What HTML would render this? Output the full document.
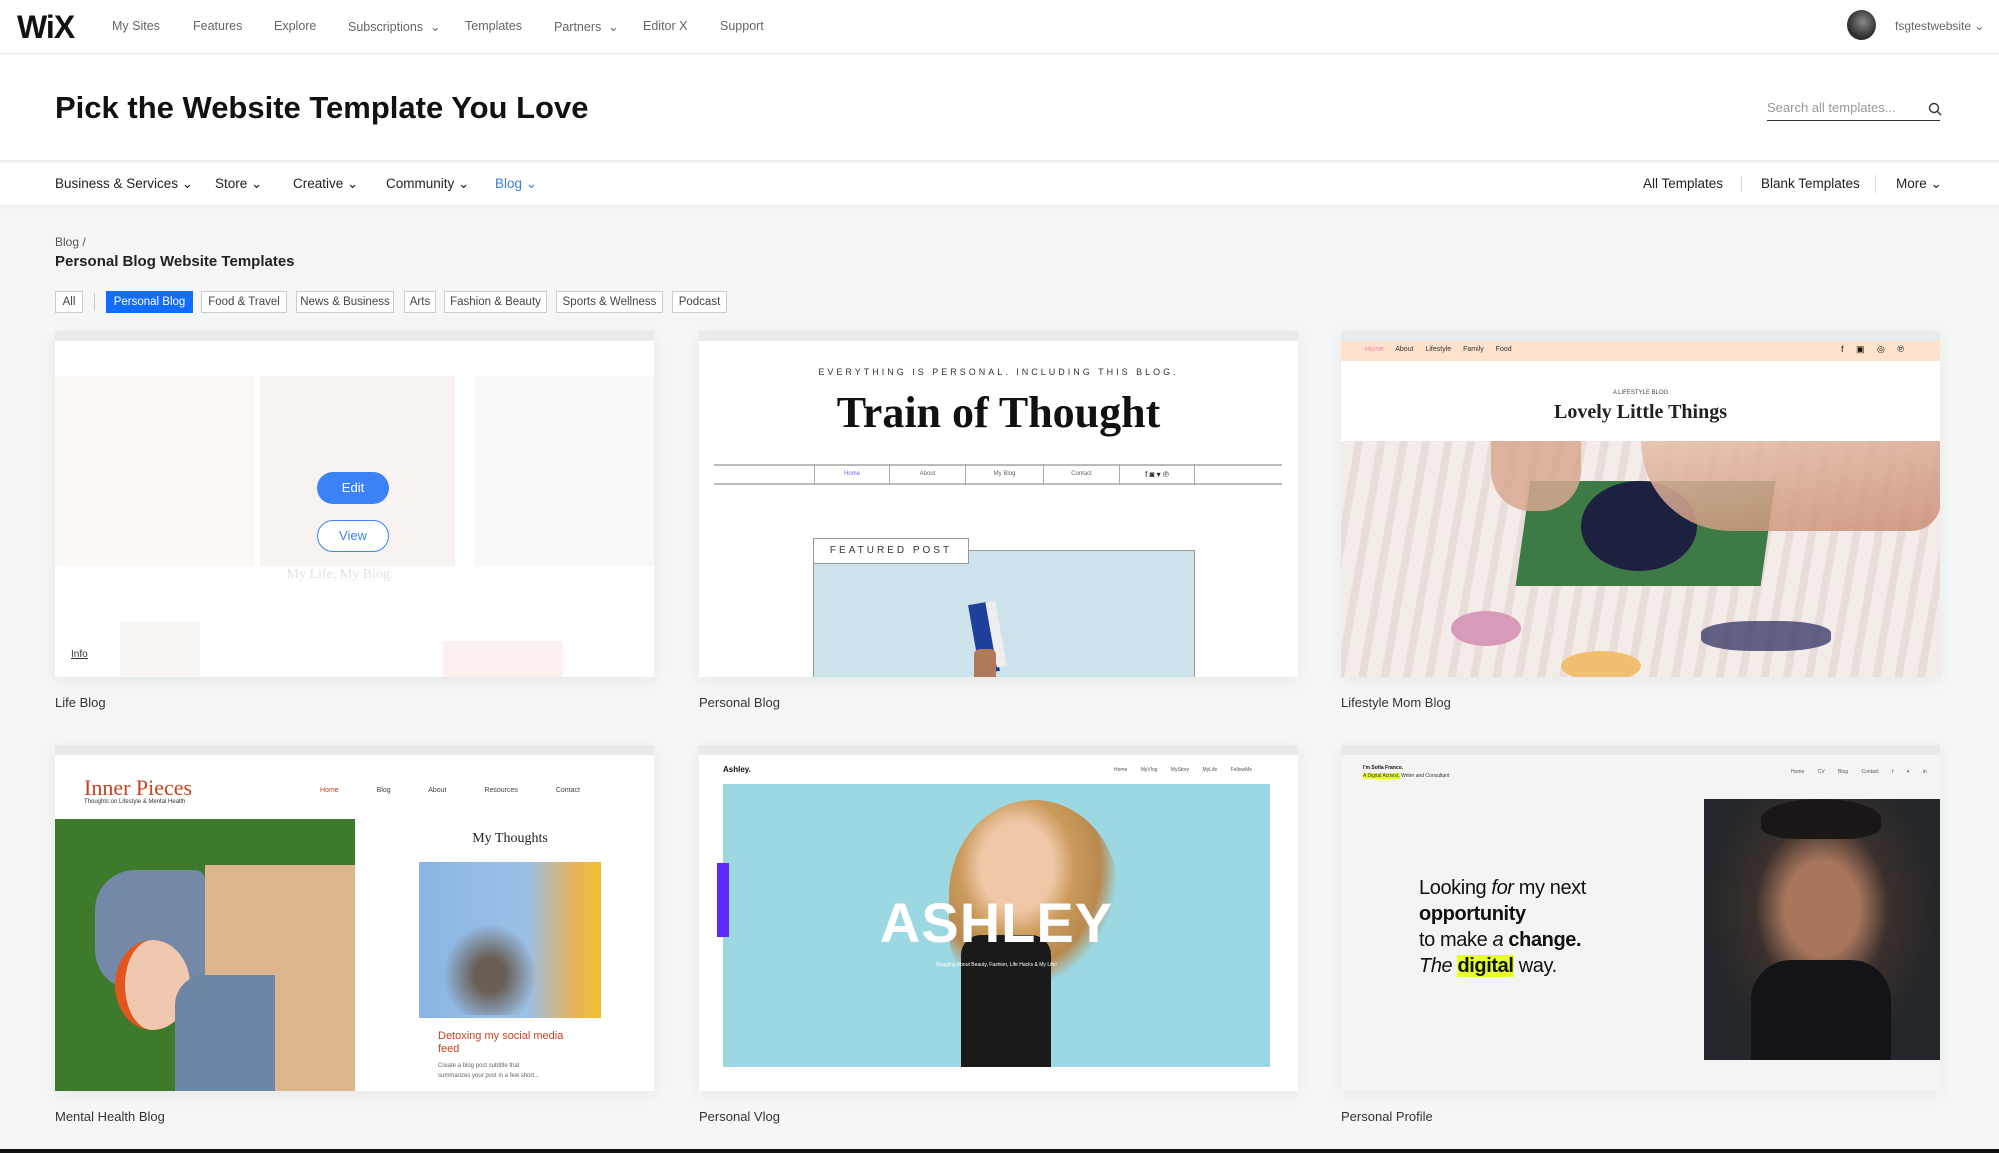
<!DOCTYPE html>
<html><head><meta charset="utf-8">
<style>
*{margin:0;padding:0;box-sizing:border-box}
body{width:1999px;height:1153px;overflow:hidden;background:#f5f6f6;font-family:"Liberation Sans",sans-serif;color:#20303c;position:relative}
.abs{position:absolute}
.top{position:absolute;left:0;top:0;width:1999px;height:54px;background:#fff;border-bottom:1px solid #eee}
.top .n{position:absolute;top:19px;font-size:12.5px;color:#666}
.hero{position:absolute;left:0;top:55px;width:1999px;height:107px;background:#fff;border-bottom:2px solid #eee}
.cat{position:absolute;left:0;top:163px;width:1999px;height:42px;background:#fff;box-shadow:0 2px 3px rgba(0,0,0,.04)}
.cat span{position:absolute;top:13px;font-size:13.5px;color:#222}
.chip{position:absolute;top:291px;height:22px;border:1px solid #ccc;background:#fff;font-size:11.5px;color:#444;line-height:20px;text-align:center}
.card{position:absolute;width:599px;height:346px;background:#fff;overflow:hidden;box-shadow:0 4px 14px rgba(0,0,0,.06)}
.card .bar{position:absolute;left:0;top:0;width:100%;height:10px;background:#e9eaec}
.lbl{position:absolute;font-size:13px;color:#333}
</style></head><body>
<div class="top">
 <div class="abs" style="left:17px;top:9px;font-size:32px;font-weight:bold;letter-spacing:-1px;color:#111">WiX</div>
 <span class="n" style="left:112px">My Sites</span>
 <span class="n" style="left:193px">Features</span>
 <span class="n" style="left:274px">Explore</span>
 <span class="n" style="left:348px">Subscriptions &nbsp;⌄</span>
 <span class="n" style="left:465px">Templates</span>
 <span class="n" style="left:554px">Partners &nbsp;⌄</span>
 <span class="n" style="left:643px">Editor X</span>
 <span class="n" style="left:720px">Support</span>
 <div class="abs" style="left:1847px;top:10px;width:29px;height:30px;border-radius:50%;background:radial-gradient(circle at 55% 40%,#888,#333 60%,#111)"></div>
 <span class="n" style="left:1895px;font-size:12px">fsgtestwebsite ⌄</span>
</div>
<div class="hero">
 <div class="abs" style="left:55px;top:35px;font-size:31px;font-weight:bold;color:#111">Pick the Website Template You Love</div>
 <div class="abs" style="left:1767px;top:45px;font-size:13px;color:#999">Search all templates...</div>
 <svg class="abs" style="left:1928px;top:47px" width="14" height="14" viewBox="0 0 14 14"><circle cx="6" cy="6" r="4.5" fill="none" stroke="#333" stroke-width="1.4"/><path d="M9.5 9.5L13 13" stroke="#333" stroke-width="1.4"/></svg>
 <div class="abs" style="left:1767px;top:65px;width:173px;height:1px;background:#333"></div>
</div>
<div class="cat">
 <span style="left:55px">Business &amp; Services ⌄</span>
 <span style="left:215px">Store ⌄</span>
 <span style="left:293px">Creative ⌄</span>
 <span style="left:386px">Community ⌄</span>
 <span style="left:495px;color:#3b7de9">Blog ⌄</span>
 <span style="left:1643px">All Templates</span>
 <div class="abs" style="left:1741px;top:12px;width:1px;height:18px;background:#ddd"></div>
 <span style="left:1761px">Blank Templates</span>
 <div class="abs" style="left:1875px;top:12px;width:1px;height:18px;background:#ddd"></div>
 <span style="left:1896px">More ⌄</span>
</div>
<div class="abs" style="left:55px;top:235px;font-size:12px;color:#555">Blog /</div>
<div class="abs" style="left:55px;top:253px;font-size:15px;font-weight:bold;color:#222">Personal Blog Website Templates</div>
<div class="chip" style="left:55px;width:28px">All</div>
<div class="abs" style="left:94px;top:293px;width:1px;height:18px;background:#ccc"></div>
<div class="chip" style="left:106px;width:87px;background:#116dff;border-color:#116dff;color:#fff">Personal Blog</div>
<div class="chip" style="left:201px;width:86px">Food &amp; Travel</div>
<div class="chip" style="left:296px;width:98px">News &amp; Business</div>
<div class="chip" style="left:404px;width:32px">Arts</div>
<div class="chip" style="left:444px;width:103px">Fashion &amp; Beauty</div>
<div class="chip" style="left:556px;width:107px">Sports &amp; Wellness</div>
<div class="chip" style="left:672px;width:55px">Podcast</div>

<!-- Card 1 -->
<div class="card" style="left:55px;top:331px">
 <div class="bar"></div>
 <div class="abs" style="left:0;top:45px;width:200px;height:190px;background:#fbf8f6"></div>
 <div class="abs" style="left:205px;top:45px;width:195px;height:190px;background:#f8f3f1"></div>
 <div class="abs" style="left:420px;top:45px;width:179px;height:190px;background:#fbf9f7"></div>
 <div class="abs" style="left:220px;top:236px;width:130px;font-family:'Liberation Serif',serif;font-size:14px;color:#e2e2e2;text-align:center">My Life, My Blog.</div>
 <div class="abs" style="left:65px;top:290px;width:80px;height:56px;background:#faf6f4"></div>
 <div class="abs" style="left:388px;top:310px;width:120px;height:36px;background:#fbf0ed"></div>
 <div class="abs" style="left:262px;top:141px;width:72px;height:32px;border-radius:16px;background:#3b82f6;color:#fff;font-size:13px;text-align:center;line-height:32px">Edit</div>
 <div class="abs" style="left:262px;top:189px;width:72px;height:32px;border-radius:16px;border:1.5px solid #3b82f6;background:#fff;color:#3b82f6;font-size:13px;text-align:center;line-height:29px">View</div>
 <div class="abs" style="left:16px;top:318px;font-size:10px;color:#333;text-decoration:underline">Info</div>
</div>
<div class="lbl" style="left:55px;top:695px">Life Blog</div>

<!-- Card 2 -->
<div class="card" style="left:699px;top:331px">
 <div class="bar"></div>
 <div class="abs" style="left:0;top:36px;width:599px;text-align:center;font-size:9px;letter-spacing:3px;color:#333">EVERYTHING IS PERSONAL. INCLUDING THIS BLOG.</div>
 <div class="abs" style="left:0;top:56px;width:599px;text-align:center;font-family:'Liberation Serif',serif;font-weight:bold;font-size:44px;color:#111">Train of Thought</div>
 <div class="abs" style="left:15px;top:133px;width:568px;height:21px;border-top:2px solid #bbb;border-bottom:2px solid #bbb"></div>
 <div class="abs" style="left:115px;top:133px;height:21px;display:flex;font-size:6px;color:#666">
  <div style="width:75px;border-left:1px solid #aaa;text-align:center;line-height:21px;color:#7a5cff">Home</div>
  <div style="width:76px;border-left:1px solid #aaa;text-align:center;line-height:21px">About</div>
  <div style="width:78px;border-left:1px solid #aaa;text-align:center;line-height:21px">My Blog</div>
  <div style="width:76px;border-left:1px solid #aaa;text-align:center;line-height:21px">Contact</div>
  <div style="width:76px;border-left:1px solid #aaa;border-right:1px solid #aaa;text-align:center;line-height:21px;color:#222;font-size:8px">f ◙ ▾ ℗</div>
 </div>
 <div class="abs" style="left:114px;top:219px;width:382px;height:140px;background:#cde3ec;border:1px solid #999"></div>
 <div class="abs" style="left:114px;top:207px;width:156px;height:26px;background:#fff;border:1.5px solid #999;font-size:10px;letter-spacing:3px;line-height:23px;text-align:center;color:#333">FEATURED POST</div>
 <div class="abs" style="left:275px;top:272px;width:20px;height:70px;background:#1e3f9a;transform:rotate(-10deg)"></div>
 <div class="abs" style="left:292px;top:270px;width:10px;height:66px;background:#eee;transform:rotate(-10deg)"></div>
 <div class="abs" style="left:275px;top:318px;width:22px;height:30px;background:#b07a5a;border-radius:6px 6px 0 0"></div>
</div>
<div class="lbl" style="left:699px;top:695px">Personal Blog</div>

<!-- Card 3 -->
<div class="card" style="left:1341px;top:331px">
 <div class="bar"></div>
 <div class="abs" style="left:0;top:10px;width:599px;height:20px;background:#fde3cb"></div>
 <div class="abs" style="left:24px;top:15px;font-size:7px;color:#333;word-spacing:10px"><span style="color:#e8a">Home</span> About Lifestyle Family Food</div>
 <div class="abs" style="left:500px;top:13px;font-size:9px;color:#111;word-spacing:10px">f ▣ ◎ ℗</div>
 <div class="abs" style="left:0;top:59px;width:599px;text-align:center;font-size:6px;color:#444">A LIFESTYLE BLOG</div>
 <div class="abs" style="left:0;top:70px;width:599px;text-align:center;font-family:'Liberation Serif',serif;font-weight:bold;font-size:20px;color:#222">Lovely Little Things</div>
 <div class="abs" style="left:0;top:110px;width:599px;height:236px;background:repeating-linear-gradient(100deg,#f3ece9 0 14px,#eadcd8 14px 22px)"></div>
 <div class="abs" style="left:182px;top:150px;width:245px;height:105px;background:#3e7a46;transform:skewX(-8deg)"></div>
 <div class="abs" style="left:240px;top:150px;width:116px;height:90px;border-radius:50%;background:#1d2140"></div>
 <div class="abs" style="left:150px;top:110px;width:90px;height:70px;background:#d8a890;border-radius:0 0 40px 40px;opacity:.85"></div>
 <div class="abs" style="left:300px;top:110px;width:300px;height:90px;background:linear-gradient(170deg,#e6c0ab,#c98e75);border-radius:0 0 40px 120px;opacity:.85"></div>
 <div class="abs" style="left:110px;top:280px;width:70px;height:35px;border-radius:50%;background:#d79ab8"></div>
 <div class="abs" style="left:220px;top:320px;width:80px;height:30px;border-radius:50%;background:#f0c070"></div>
 <div class="abs" style="left:360px;top:290px;width:130px;height:30px;border-radius:40%;background:#3b3f6a;opacity:.8"></div>
</div>
<div class="lbl" style="left:1341px;top:695px">Lifestyle Mom Blog</div>

<!-- Card 4 -->
<div class="card" style="left:55px;top:745px">
 <div class="bar"></div>
 <div class="abs" style="left:29px;top:30px;font-family:'Liberation Serif',serif;font-size:22px;color:#c2451f">Inner Pieces</div>
 <div class="abs" style="left:29px;top:54px;font-size:6px;color:#333">Thoughts on Lifestyle &amp; Mental Health</div>
 <div class="abs" style="left:265px;top:42px;font-size:7px;color:#444;word-spacing:36px"><span style="color:#c2451f">Home</span> Blog About Resources Contact</div>
 <div class="abs" style="left:0;top:74px;width:300px;height:272px;background:#3e7a2c"></div>
 <div class="abs" style="left:150px;top:120px;width:150px;height:226px;background:#ddb690"></div>
 <div class="abs" style="left:40px;top:125px;width:110px;height:120px;background:#7488a8;border-radius:40px 10px 10px 40px"></div>
 <div class="abs" style="left:60px;top:195px;width:75px;height:90px;border-radius:50%;background:#f0c8b0;border-left:10px solid #e2561e"></div>
 <div class="abs" style="left:120px;top:230px;width:100px;height:116px;background:#6e86a6;border-radius:30px 0 0 0"></div>
 <div class="abs" style="left:364px;top:86px;width:182px;text-align:center;font-family:'Liberation Serif',serif;font-size:14px;color:#222">My Thoughts</div>
 <div class="abs" style="left:364px;top:117px;width:182px;height:156px;background:linear-gradient(90deg,#8ab6e2 0%,#9cc0e6 60%,#e8b35a 85%,#f0c030)"></div>
 <div class="abs" style="left:380px;top:170px;width:110px;height:100px;background:radial-gradient(ellipse at 50% 60%,#6a5f55 0 20%,transparent 60%)"></div>
 <div class="abs" style="left:383px;top:285px;font-size:11px;color:#c2451f;line-height:13px">Detoxing my social media<br>feed</div>
 <div class="abs" style="left:383px;top:316px;font-size:6px;color:#666;line-height:10px">Create a blog post subtitle that<br>summarizes your post in a few short...</div>
</div>
<div class="lbl" style="left:55px;top:1109px">Mental Health Blog</div>

<!-- Card 5 -->
<div class="card" style="left:699px;top:745px">
 <div class="bar"></div>
 <div class="abs" style="left:24px;top:20px;font-size:8px;font-weight:bold;color:#111">Ashley.</div>
 <div class="abs" style="left:415px;top:22px;font-size:5px;color:#555;word-spacing:12px">Home MyVlog MyStory MyLife FollowMe</div>
 <div class="abs" style="left:24px;top:39px;width:547px;height:283px;background:#9bd8e2"></div>
 <div class="abs" style="left:250px;top:55px;width:170px;height:190px;border-radius:50% 50% 40% 30%;background:radial-gradient(ellipse at 40% 35%,#f0c8a8 0 25%,#c99a5a 40%,#b98a50 58%,transparent 70%)"></div>
 <div class="abs" style="left:262px;top:190px;width:90px;height:132px;background:#1a1a1a;border-radius:20px 20px 0 0"></div>
 <div class="abs" style="left:24px;top:145px;width:547px;text-align:center;font-size:56px;font-weight:bold;color:#fff;letter-spacing:1px">ASHLEY</div>
 <div class="abs" style="left:24px;top:217px;width:547px;text-align:center;font-size:5px;color:#fff">Blogging About Beauty, Fashion, Life Hacks &amp; My Life!</div>
 <div class="abs" style="left:18px;top:118px;width:12px;height:74px;background:#5b2bff"></div>
</div>
<div class="lbl" style="left:699px;top:1109px">Personal Vlog</div>

<!-- Card 6 -->
<div class="card" style="left:1341px;top:745px;background:#f4f4f4">
 <div class="bar"></div>
 <div class="abs" style="left:22px;top:20px;font-size:5px;font-weight:bold;color:#111">I'm Sofia Franco.</div>
 <div class="abs" style="left:22px;top:28px;font-size:5px;color:#333"><span style="background:#e8ff2a">A Digital Activist,</span> Writer and Consultant</div>
 <div class="abs" style="left:450px;top:24px;font-size:5px;color:#555;word-spacing:12px;white-space:nowrap">Home CV Blog Contact f ▾ in ◎</div>
 <div class="abs" style="left:78px;top:130px;font-size:20px;line-height:26px;color:#111;letter-spacing:-.4px">Looking <i>for</i> my next<br><b>opportunity</b><br>to make <i>a</i> <b>change.</b><br><i>The</i> <b style="background:#e8ff2a">digital</b> way.</div>
 <div class="abs" style="left:363px;top:54px;width:236px;height:261px;background:radial-gradient(ellipse at 50% 42%,#a8765c 0 22%,#3a302c 40%,#23262a 70%)"></div>
 <div class="abs" style="left:420px;top:54px;width:120px;height:40px;border-radius:50% 50% 30% 30%;background:#1a1716"></div>
 <div class="abs" style="left:410px;top:215px;width:140px;height:100px;background:#121418;border-radius:40px 40px 0 0"></div>
</div>
<div class="lbl" style="left:1341px;top:1109px">Personal Profile</div>

<div class="abs" style="left:0;top:1149px;width:1999px;height:4px;background:#111"></div>
</body></html>
